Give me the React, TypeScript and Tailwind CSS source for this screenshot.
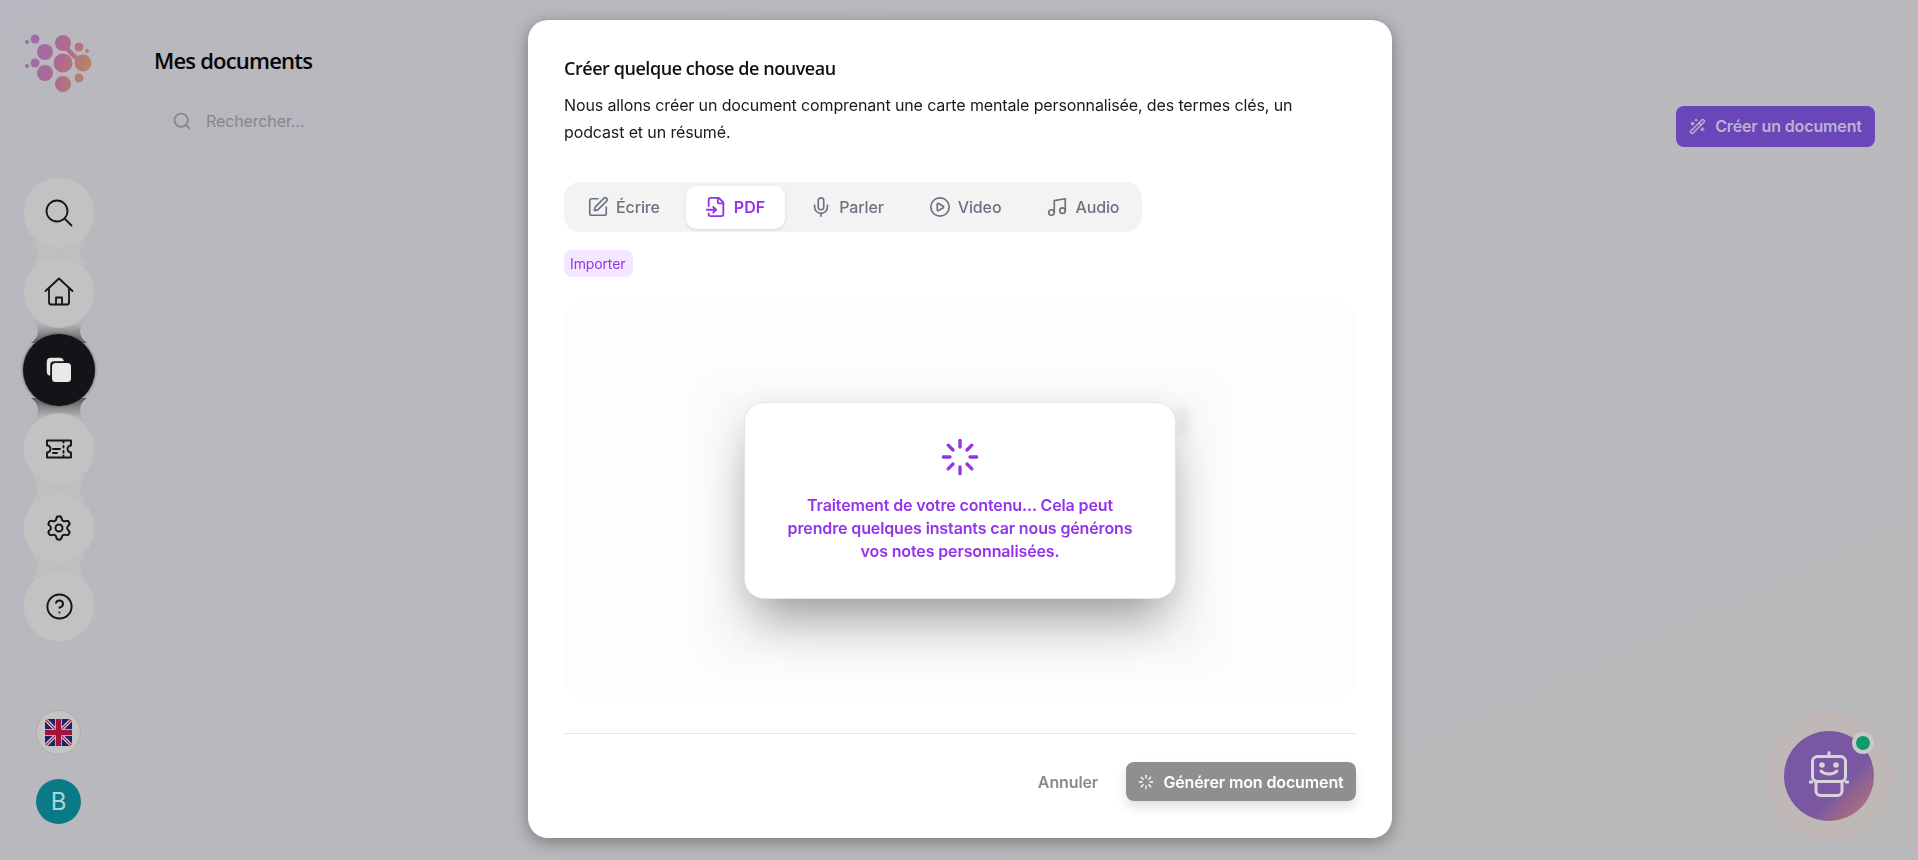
import React from "react";
import { Settings, CircleHelp, SquarePen, Mic, CirclePlay, Music, WandSparkles, Loader, FileInput, Search } from "lucide-react";

const Neck = ({ id }: { id?: string }) => (
  <svg width="56" height="24" viewBox="0 0 56 24" className="absolute left-[8px] top-[-15px]" fill={id ? `url(#${id})` : "#bfbfc0"}>
    <path d="M0 0C9.300 6 9.300 18 0 24H56C46.700 18 46.700 6 56 0Z" />
  </svg>
);

const NavItem = ({ children, dark }: { children: React.ReactNode; dark?: boolean }) => (
  <div className={`relative z-10 flex h-[72px] w-[72px] items-center justify-center rounded-full ${dark ? "bg-[#131318] text-[#e8e8e8] shadow-[0_0_3px_#4a4a4c]" : "border border-[#bcbcbd] bg-[#c2c2c3] text-[#151515]"}`}>
    {children}
  </div>
);

const Logo = () => (
  <svg width="68" height="62" viewBox="0 0 68 62">
    <defs>
      <linearGradient id="lg" gradientUnits="userSpaceOnUse" x1="0" y1="10" x2="68" y2="30">
        <stop offset="0" stopColor="#9a6db2" />
        <stop offset="0.55" stopColor="#b0698f" />
        <stop offset="1" stopColor="#b98662" />
      </linearGradient>
    </defs>
    <g fill="url(#lg)">
      <circle cx="10" cy="6" r="4.500" />
      <circle cx="2" cy="9" r="2" />
      <circle cx="20" cy="19" r="8" />
      <circle cx="10" cy="30" r="4.500" />
      <circle cx="2" cy="33" r="2" />
      <circle cx="20" cy="40" r="8" />
      <circle cx="38" cy="30" r="9.500" />
      <circle cx="38" cy="51" r="8" />
      <circle cx="54" cy="45" r="4.500" />
      <circle cx="54" cy="14" r="4.500" />
      <circle cx="62" cy="18" r="2" />
      <circle cx="38" cy="10" r="8" />
      <circle cx="58" cy="30" r="8.500" />
      <path d="M38 10Q46 22 58 30" fill="none" stroke="url(#lg)" strokeWidth="4.500" />
    </g>
  </svg>
);

const Flag = () => (
  <svg width="27" height="27" viewBox="0 0 27 27" className="rounded-[4px]">
    <rect width="27" height="27" fill="#16266a" />
    <path d="M0 0L27 27M27 0L0 27" stroke="#cfcfd2" strokeWidth="3.500" />
    <path d="M0 0L27 27M27 0L0 27" stroke="#a3123c" strokeWidth="1.200" />
    <rect x="10" width="7" height="27" fill="#cfcfd2" />
    <rect y="10" width="27" height="7" fill="#cfcfd2" />
    <rect x="10.750" width="5.500" height="27" fill="#a3123c" />
    <rect y="10.750" width="27" height="5.500" fill="#a3123c" />
  </svg>
);

const Tab = ({ icon, label, active }: { icon: React.ReactNode; label: string; active?: boolean }) => (
  <div className={`flex h-[43px] items-center gap-[7px] rounded-[10px] pl-[19px] pr-5 text-[16px] ${active ? "bg-white font-semibold tracking-normal text-[#9333ea] shadow-sm" : "font-medium text-[#6b7280]"}`}>
    {icon}
    <span>{label}</span>
  </div>
);

export default function App() {
  return (
    <div className="relative h-[860px] w-[1918px] overflow-hidden bg-gradient-to-br from-[#b9b7bf] to-[#b9b9bb] font-['Inter',sans-serif] tracking-[-0.125px]">
      <div className="flex h-full">
        <aside className="flex w-[118px] flex-col items-center">
          <div className="mt-[33px] h-[62px]"><Logo /></div>
          <nav className="mt-[82px] flex flex-col gap-[6.7px]">
            <NavItem>
              <svg width="30" height="30" viewBox="0 0 30 30" fill="none" stroke="currentColor" strokeWidth="1.800" strokeLinecap="round"><circle cx="13" cy="13" r="10.500" /><path d="M21 21l6.500 6.500" /></svg>
            </NavItem>
            <div className="relative"><Neck /><NavItem>
              <svg width="30" height="30" viewBox="0 0 30 30" fill="none" stroke="currentColor" strokeWidth="1.800" strokeLinecap="round" strokeLinejoin="round"><path d="M1.500 14 15 1.500 28.500 14" /><path d="M5 11v14.500a2 2 0 0 0 2 2h16a2 2 0 0 0 2-2V11" /><path d="M12 27.500V20.500h6v7" /></svg>
            </NavItem></div>
            <div className="relative"><Neck id="neckIn" /><NavItem dark>
              <svg width="28" height="28" viewBox="0 0 28 28" fill="#e8e8e8"><path d="M5 19.500A3.500 3.500 0 0 1 2 16V5.500A3.500 3.500 0 0 1 5.500 2H15a3.500 3.500 0 0 1 3.500 3H9a4 4 0 0 0-4 4Z" stroke="#e8e8e8" strokeWidth="0.500" /><rect x="7" y="7" width="19" height="19" rx="3.500" /></svg>
            </NavItem></div>
            <div className="relative"><Neck id="neckOut" /><NavItem>
              <svg width="30" height="30" viewBox="0 0 30 30" fill="none" stroke="currentColor" strokeWidth="1.900" strokeLinecap="round" strokeLinejoin="round"><path d="M3 6.500h24v5a3.500 3.500 0 0 0 0 7v5H3v-5a3.500 3.500 0 0 0 0-7Z" /><path d="M19.500 7v1.500M19.500 12v1.500M19.500 17v1.500M19.500 21.500v1.500M9 15h7M9 19h4" /></svg>
            </NavItem></div>
            <div className="relative"><Neck /><NavItem><Settings size={28} strokeWidth={1.700} /></NavItem></div>
            <div className="relative"><Neck /><NavItem><CircleHelp size={29} strokeWidth={1.600} /></NavItem></div>
          </nav>
          <div className="-ml-[1px] mt-[68px] flex h-[45px] w-[45px] items-center justify-center rounded-full border border-[#adadae] bg-[#c4c4c5]"><Flag /></div>
          <div className="-ml-[1px] mt-[24px] flex h-[45px] w-[45px] items-center justify-center rounded-full bg-[#0a7a87] text-[24px] text-[#a9d4d9]">B</div>
        </aside>
        <main className="flex-1 pl-[36px] pr-[43px]">
          <h1 className="mt-[46px] font-['Open_Sans',sans-serif] text-[22px] font-semibold leading-[28px] tracking-[-0.8px] text-[#050505]">Mes documents</h1>
          <div className="mt-[32px] flex items-start justify-between">
            <div className="mt-[3px] flex items-center gap-[14px] pl-[18px] text-[16px] text-[#85858c]">
              <Search size={20} strokeWidth={2} />
              <span>Rechercher...</span>
            </div>
            <div className="flex h-[41px] w-[199px] items-center justify-center gap-[9px] rounded-lg bg-[#6b46b8] pb-[1px] text-[16px] font-semibold text-[#bdb3cf]">
              <WandSparkles size={17} />
              <span>Créer un document</span>
            </div>
          </div>
        </main>
      </div>

      <div className="absolute bottom-[20px] right-[25px] flex h-[128px] w-[128px] items-center justify-center rounded-full bg-[#bfb8b6]">
        <div className="relative flex h-[90px] w-[90px] items-center justify-center rounded-full bg-[linear-gradient(135deg,#7a57a3_62%,#b9776f_95%)] pb-[4px]">
          <svg width="40" height="46" viewBox="0 0 40 46" fill="none" stroke="#d8d5da" strokeWidth="3" strokeLinecap="round" strokeLinejoin="round">
            <path d="M20 1.500v3" />
            <rect x="3.500" y="5.500" width="33" height="25" rx="5" />
            <path d="M12 20c4 4 12 4 16 0" />
            <circle cx="13" cy="14" r="1.300" fill="#d8d5da" />
            <circle cx="27" cy="14" r="1.300" fill="#d8d5da" />
            <path d="M7 31v9a4.500 4.500 0 0 0 4.500 4.500h17A4.500 4.500 0 0 0 33 40v-9M1 31h2M37 31h2" />
          </svg>
          <div className="absolute right-0 top-[1px] flex h-[22px] w-[22px] items-center justify-center rounded-full bg-[#c9c9ca]">
            <div className="h-[14px] w-[14px] rounded-full bg-[#0b9a68]" />
          </div>
        </div>
      </div>

      <div className="absolute inset-0 flex items-start justify-center pl-[2px] pt-[20px] backdrop-blur-[0.5px]">
        <div className="flex h-[818px] w-[864px] flex-col rounded-[20px] bg-white px-[36px] pt-[34px] shadow-[0_4px_16px_rgba(0,0,0,0.35)]">
          <h2 className="font-['Open_Sans',sans-serif] text-[18px] font-semibold leading-[28px] tracking-[-0.45px] text-[#111]">Créer quelque chose de nouveau</h2>
          <p className="mt-[10px] text-[16px] leading-[27px] text-[#1a1a1a]">Nous allons créer un document comprenant une carte mentale personnalisée, des termes clés, un podcast et un résumé.</p>
          <div className="mt-[36px] flex h-[50px] w-fit items-center gap-[6px] rounded-2xl bg-[#f3f3f4] pl-[4px] pr-[3px]">
            <Tab icon={<SquarePen size={22} strokeWidth={1.800} />} label="Écrire" />
            <Tab active icon={<FileInput size={22} strokeWidth={2} />} label="PDF" />
            <Tab icon={<Mic size={22} strokeWidth={1.800} />} label="Parler" />
            <Tab icon={<CirclePlay size={22} strokeWidth={1.800} />} label="Video" />
            <Tab icon={<Music size={22} strokeWidth={1.800} />} label="Audio" />
          </div>
          <div className="mt-[18px] flex h-[27px] w-[69px] items-center rounded-lg bg-[#f3e8ff] pl-[6px] text-[14px] text-[#9333ea]">Importer</div>
          <div className="relative mt-[26px] flex h-[394px] items-center justify-center rounded-2xl bg-[#fdfdfe]">
            <div className="absolute left-[140px] top-[80px] h-[280px] w-[515px] rounded-2xl bg-[#f9f9fa] blur-md" />
            <div className="absolute left-[612px] top-[106px] h-[26px] w-[12px] bg-[#e8e8ea] blur-[5px]" />
            <div className="relative z-10 flex h-[197px] w-[432px] flex-col items-center rounded-[20px] border border-[#e5e5ea] bg-white pt-[34px] shadow-[0_30px_50px_-10px_rgba(0,0,0,0.36),0_0_30px_rgba(0,0,0,0.05)]">
              <Loader size={40} strokeWidth={2} className="text-[#9333ea]" />
              <p className="mt-[17px] w-[360px] text-center text-[16px] font-semibold leading-[23px] text-[#9333ea]">Traitement de votre contenu... Cela peut prendre quelques instants car nous générons vos notes personnalisées.</p>
            </div>
          </div>
          <div className="mt-[36px] border-t border-[#e5e5e5]" />
          <div className="mt-[28px] flex items-center justify-end gap-[28px]">
            <span className="text-[16px] font-semibold text-[#8a8a8a]">Annuler</span>
            <div className="flex h-[39px] w-[230px] items-center justify-center gap-[9px] rounded-lg bg-[#8f8f8f] text-[16px] font-semibold text-white shadow-[0_6px_12px_rgba(0,0,0,0.12)]">
              <Loader size={16} />
              <span>Générer mon document</span>
            </div>
          </div>
        </div>
      </div>
      <svg width="0" height="0" className="absolute">
        <defs>
          <linearGradient id="neckIn" x1="0" y1="0" x2="0" y2="1"><stop offset="0.2" stopColor="#b5b5b6" /><stop offset="1" stopColor="#5e5e60" /></linearGradient>
          <linearGradient id="neckOut" x1="0" y1="0" x2="0" y2="1"><stop offset="0" stopColor="#5e5e60" /><stop offset="0.8" stopColor="#b5b5b6" /></linearGradient>
        </defs>
      </svg>
    </div>
  );
}
